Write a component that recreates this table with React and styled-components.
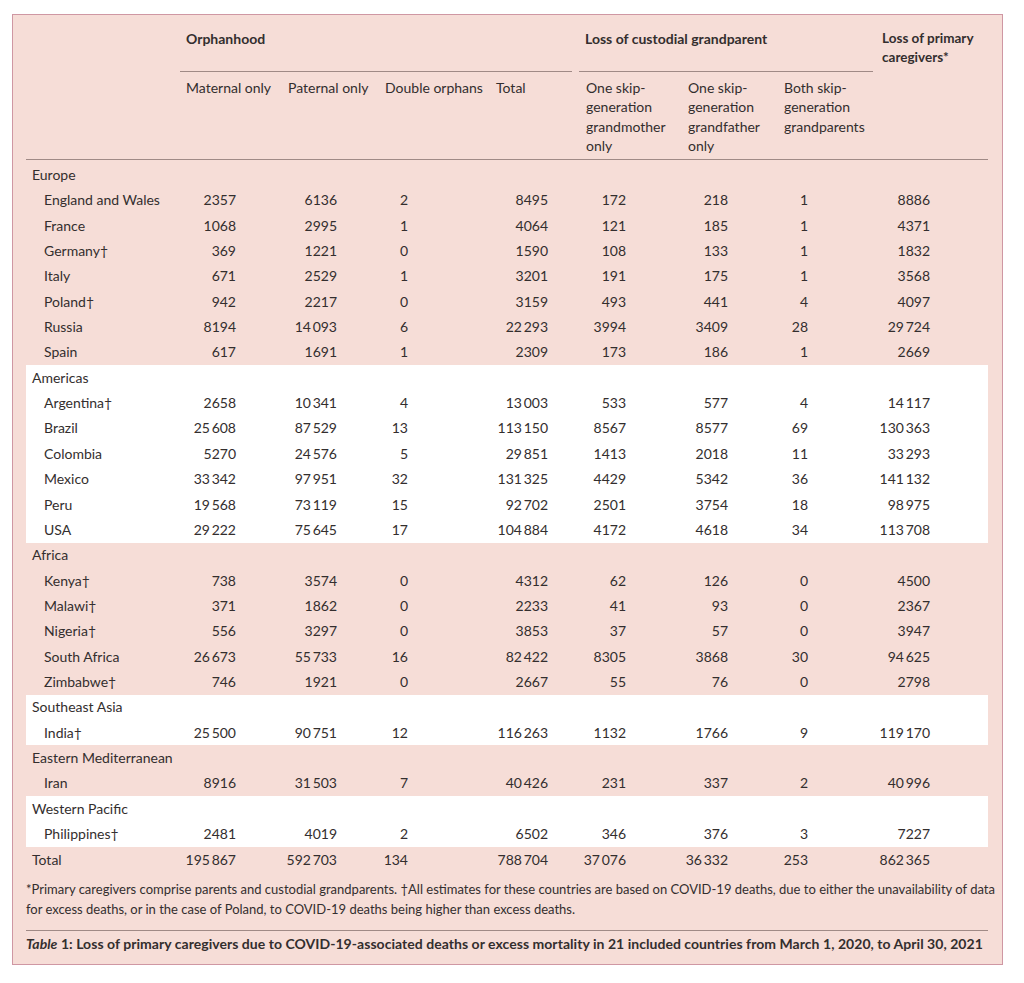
import React from 'react';
import styled, { createGlobalStyle } from 'styled-components';

const GlobalStyle = createGlobalStyle`
  body {
    margin: 0;
    background: #fff;
    font-family: Lato, "Open Sans", sans-serif;
    color: #332e2e;
  }
`;

const Page = styled.div`
  padding: 14px 0 0 12px;
`;

const Box = styled.div`
  width: 991px;
  height: 951px;
  border: 1px solid #cf97a3;
  background: #f6ddd7;
  padding: 0 15px 0 13px;
  box-sizing: border-box;
`;

const Table = styled.table`
  width: 962px;
  table-layout: fixed;
  border-collapse: separate;
  border-spacing: 0;
  font-size: 14px;
`;

const GroupHead = styled.th`
  padding: 0 0 0 ${p => p.$flush ? 0 : 6}px;
  text-align: left;
  vertical-align: top;
  font-weight: 700;
  line-height: 19px;
  border-bottom: ${p => p.$ruled ? '1px solid #a08a86' : 'none'};
`;

const GroupTitle = styled.div`
  height: 42px;
  padding: 14px 0 0 6px;
  margin-right: ${p => p.$gap || 0}px;
  margin-left: ${p => p.$lead || 0}px;
  border-bottom: 1px solid #a08a86;
  box-sizing: content-box;
`;

const SideTitle = styled.div`
  padding-top: 14px;
  font-size: 13.5px;
  line-height: 19px;
  white-space: nowrap;
`;

const SubHead = styled.th`
  padding: 6px 0 4px 6px;
  text-align: left;
  vertical-align: top;
  font-weight: 400;
  line-height: 19.3px;
  white-space: nowrap;
  border-bottom: 1px solid #a08a86;
`;

const Spacer = styled.tr`
  height: 2px;
`;

const Row = styled.tr`
  height: 25.37px;
  background: ${p => p.$white ? '#fff' : 'transparent'};
`;

const Label = styled.td`
  padding: 0 0 0 ${p => p.$indent ? 18 : 6}px;
  white-space: nowrap;
  line-height: 20px;
`;

const Num = styled.td`
  padding: 0 ${p => p.$pad}px 0 0;
  text-align: right;
  white-space: nowrap;
  line-height: 20px;
`;

const Footnote = styled.p`
  margin: 7px 0 0;
  font-size: 13px;
  line-height: 20px;
  white-space: nowrap;
  padding-bottom: 11px;
  border-bottom: 1px solid #a08a86;
  width: 962px;
`;

const Caption = styled.p`
  margin: 0;
  padding-top: 3px;
  font-size: 14px;
  font-weight: 700;
  letter-spacing: 0.04px;
  line-height: 20px;
  white-space: nowrap;

  em {
    font-style: italic;
  }
`;

const widths = [154, 102, 97, 111, 90, 102, 96, 98, 112];
const pads = [46, 42, 82, 32, 56, 50, 68, 58];

const regions = [
  {
    name: 'Europe',
    white: false,
    rows: [
      ['England and Wales', 2357, 6136, 2, 8495, 172, 218, 1, 8886],
      ['France', 1068, 2995, 1, 4064, 121, 185, 1, 4371],
      ['Germany†', 369, 1221, 0, 1590, 108, 133, 1, 1832],
      ['Italy', 671, 2529, 1, 3201, 191, 175, 1, 3568],
      ['Poland†', 942, 2217, 0, 3159, 493, 441, 4, 4097],
      ['Russia', 8194, 14093, 6, 22293, 3994, 3409, 28, 29724],
      ['Spain', 617, 1691, 1, 2309, 173, 186, 1, 2669],
    ],
  },
  {
    name: 'Americas',
    white: true,
    rows: [
      ['Argentina†', 2658, 10341, 4, 13003, 533, 577, 4, 14117],
      ['Brazil', 25608, 87529, 13, 113150, 8567, 8577, 69, 130363],
      ['Colombia', 5270, 24576, 5, 29851, 1413, 2018, 11, 33293],
      ['Mexico', 33342, 97951, 32, 131325, 4429, 5342, 36, 141132],
      ['Peru', 19568, 73119, 15, 92702, 2501, 3754, 18, 98975],
      ['USA', 29222, 75645, 17, 104884, 4172, 4618, 34, 113708],
    ],
  },
  {
    name: 'Africa',
    white: false,
    rows: [
      ['Kenya†', 738, 3574, 0, 4312, 62, 126, 0, 4500],
      ['Malawi†', 371, 1862, 0, 2233, 41, 93, 0, 2367],
      ['Nigeria†', 556, 3297, 0, 3853, 37, 57, 0, 3947],
      ['South Africa', 26673, 55733, 16, 82422, 8305, 3868, 30, 94625],
      ['Zimbabwe†', 746, 1921, 0, 2667, 55, 76, 0, 2798],
    ],
  },
  {
    name: 'Southeast Asia',
    white: true,
    rows: [['India†', 25500, 90751, 12, 116263, 1132, 1766, 9, 119170]],
  },
  {
    name: 'Eastern Mediterranean',
    white: false,
    rows: [['Iran', 8916, 31503, 7, 40426, 231, 337, 2, 40996]],
  },
  {
    name: 'Western Pacific',
    white: true,
    rows: [['Philippines†', 2481, 4019, 2, 6502, 346, 376, 3, 7227]],
  },
];

const totals = ['Total', 195867, 592703, 134, 788704, 37076, 36332, 253, 862365];

// thin space between thousands, only from five digits up
const fmt = n => {
  const s = String(n);
  if (s.length < 5) return s;
  return s.slice(0, -3) + '\u2009' + s.slice(-3);
};

function DataRow({ row, white, indent }) {
  const [label, ...nums] = row;
  return (
    <Row $white={white}>
      <Label $indent={indent}>{label}</Label>
      {nums.map((n, i) => (
        <Num key={i} $pad={pads[i]}>{fmt(n)}</Num>
      ))}
    </Row>
  );
}

export default function App() {
  return (
    <Page>
      <GlobalStyle />
      <Box>
        <Table>
          <colgroup>
            {widths.map((w, i) => <col key={i} style={{ width: w }} />)}
          </colgroup>
          <thead>
            <tr>
              <GroupHead rowSpan={2} $ruled />
              <GroupHead colSpan={4} $flush>
                <GroupTitle $gap={8}>Orphanhood</GroupTitle>
              </GroupHead>
              <GroupHead colSpan={3} $flush>
                <GroupTitle $lead={-1} $gap={3}>Loss of custodial grandparent</GroupTitle>
              </GroupHead>
              <GroupHead rowSpan={2} $ruled>
                <SideTitle>Loss of primary<br />caregivers*</SideTitle>
              </GroupHead>
            </tr>
            <tr>
              <SubHead>Maternal only</SubHead>
              <SubHead>Paternal only</SubHead>
              <SubHead>Double orphans</SubHead>
              <SubHead>Total</SubHead>
              <SubHead>One skip-<br />generation<br />grandmother<br />only</SubHead>
              <SubHead>One skip-<br />generation<br />grandfather<br />only</SubHead>
              <SubHead>Both skip-<br />generation<br />grandparents</SubHead>
            </tr>
          </thead>
          <tbody>
            <Spacer />
            {regions.map(r => (
              <React.Fragment key={r.name}>
                <Row $white={r.white}>
                  <Label colSpan={9}>{r.name}</Label>
                </Row>
                {r.rows.map(row => (
                  <DataRow key={row[0]} row={row} white={r.white} indent />
                ))}
              </React.Fragment>
            ))}
            <DataRow row={totals} />
          </tbody>
        </Table>
        <Footnote>
          *Primary caregivers comprise parents and custodial grandparents. †All estimates for these countries are based on COVID-19 deaths, due to either the unavailability of data
          <br />
          for excess deaths, or in the case of Poland, to COVID-19 deaths being higher than excess deaths.
        </Footnote>
        <Caption>
          <em>Table</em> 1: Loss of primary caregivers due to COVID-19-associated deaths or excess mortality in 21 included countries from March 1, 2020, to April 30, 2021
        </Caption>
      </Box>
    </Page>
  );
}
